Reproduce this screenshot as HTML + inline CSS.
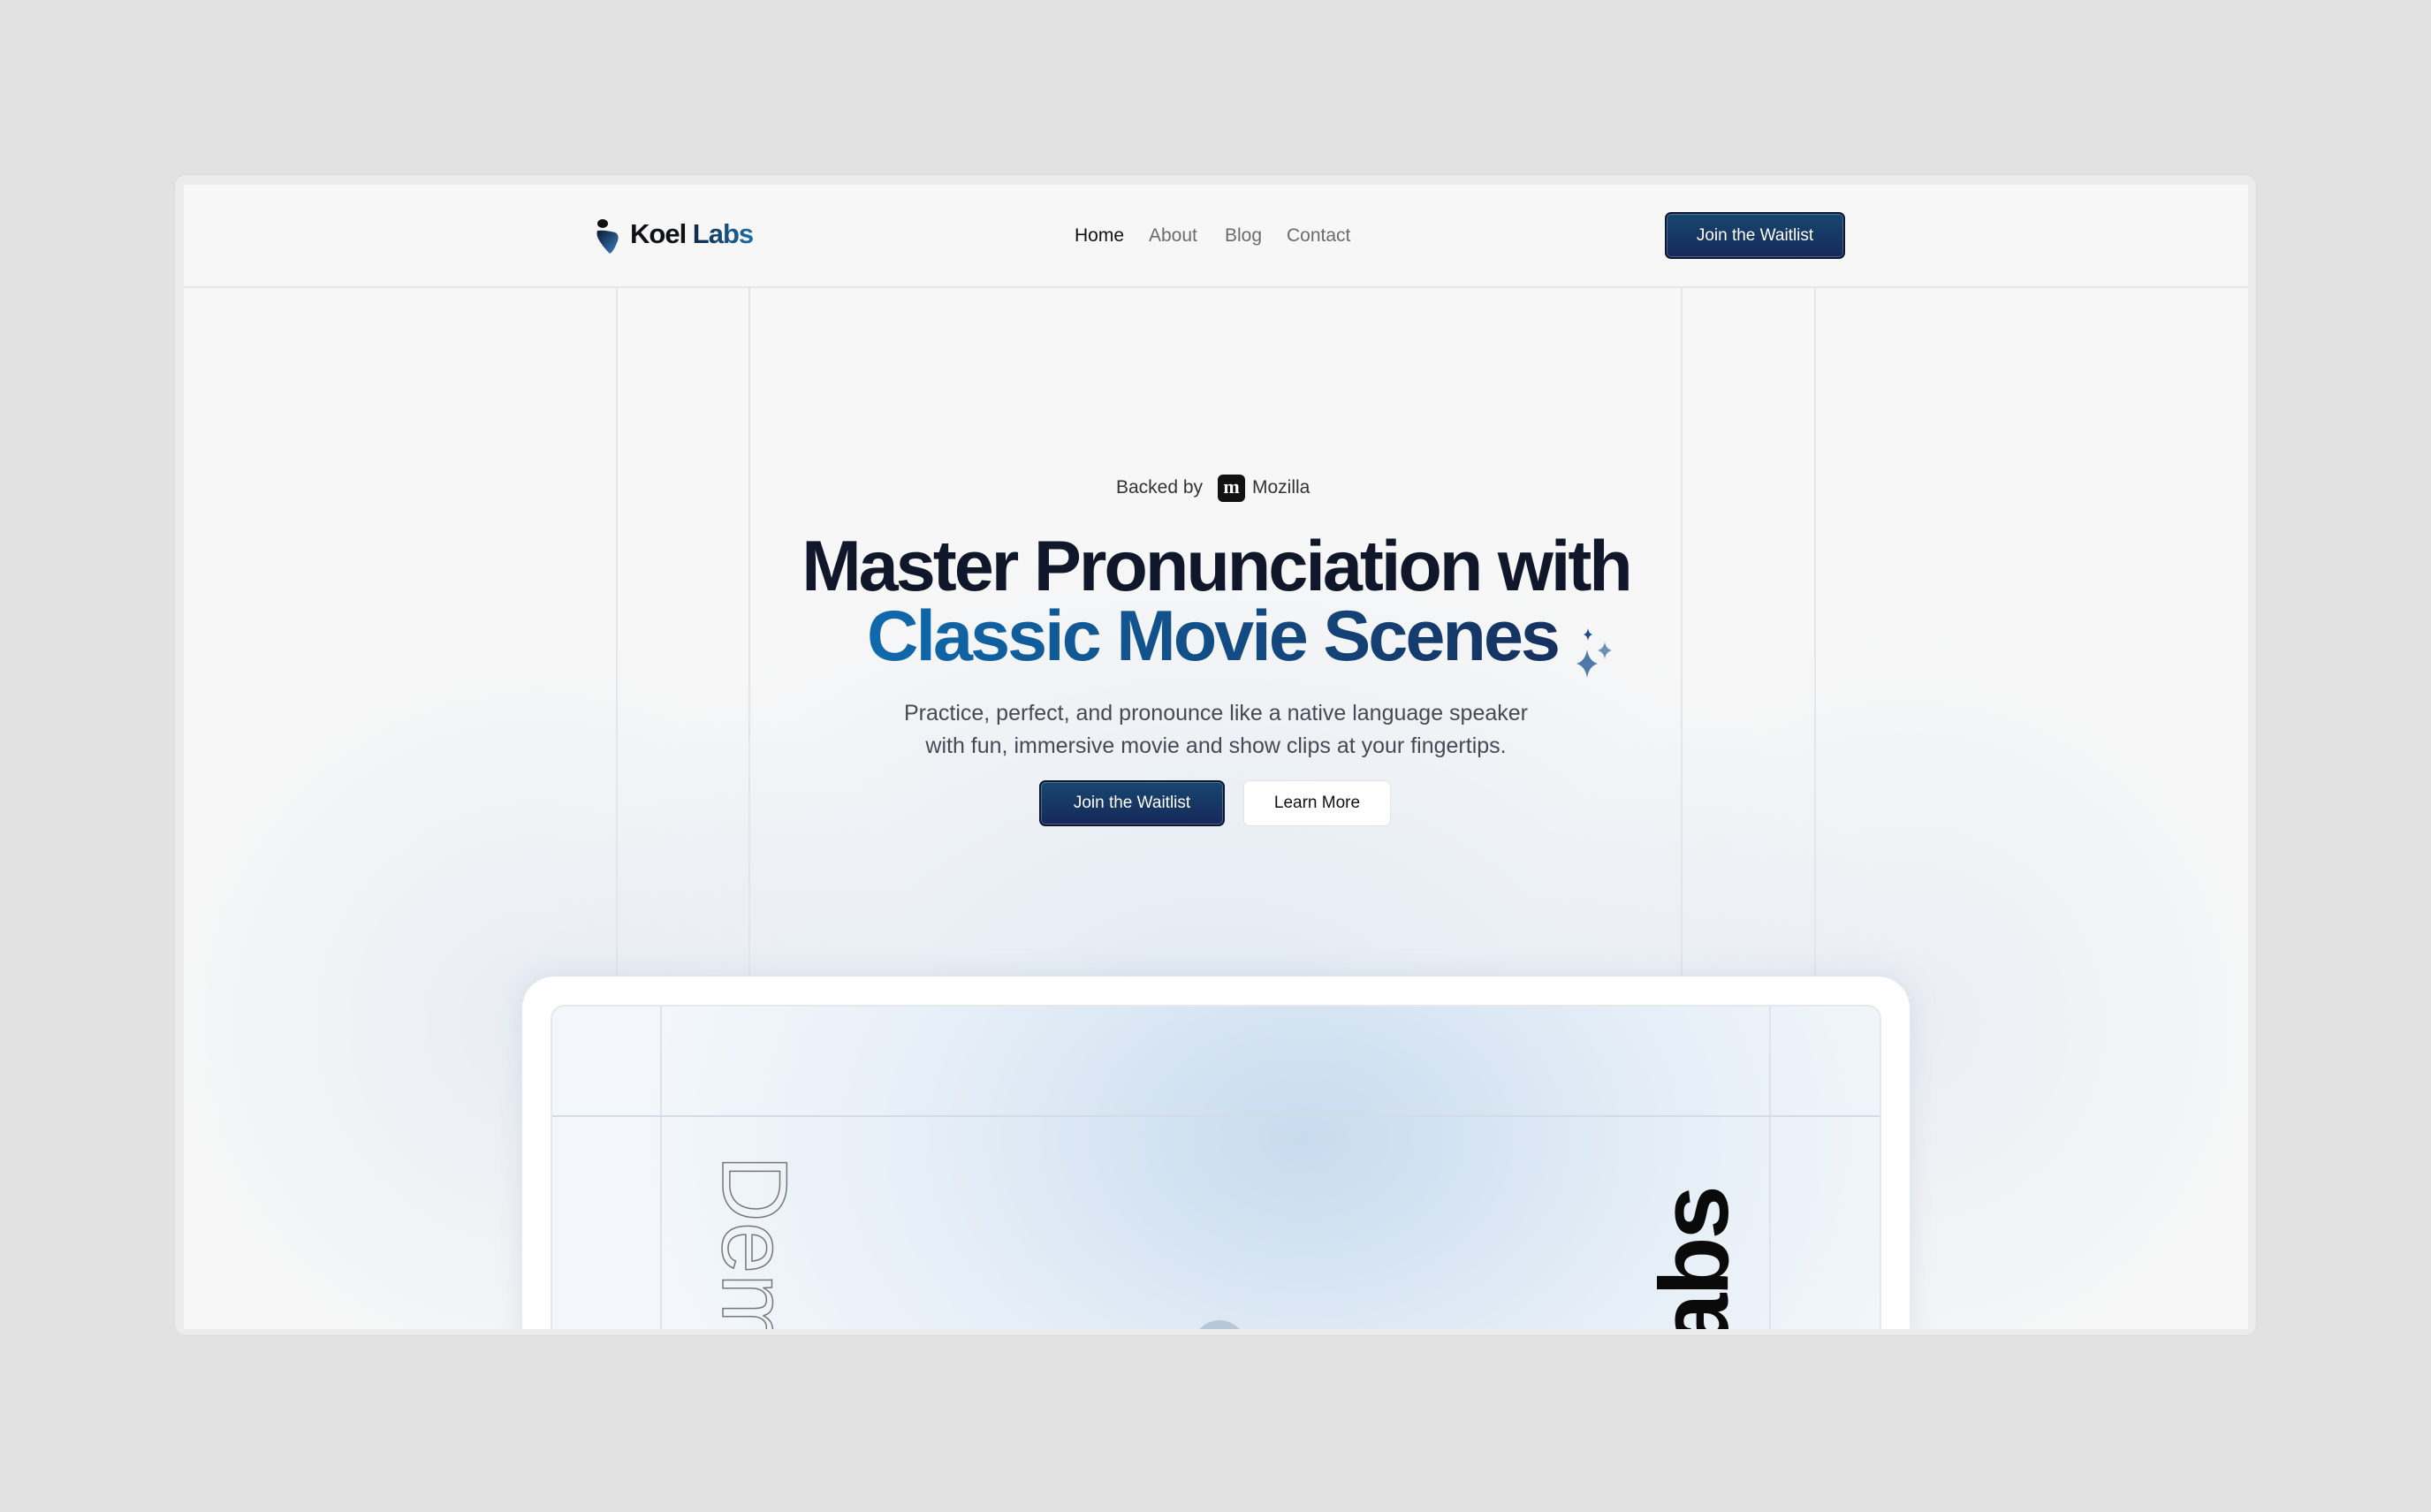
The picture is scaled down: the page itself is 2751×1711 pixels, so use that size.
<!DOCTYPE html>
<html><head><meta charset="utf-8"><style>
*{margin:0;padding:0;box-sizing:border-box}
body{width:2751px;height:1711px;background:#e2e2e2;position:relative;overflow:hidden;font-family:"Liberation Sans",sans-serif}
.frame{position:absolute;left:198px;top:198px;width:2355px;height:1313px;background:#ececec;border-radius:12px;box-shadow:0 0 2px rgba(0,0,0,.08)}
.page{position:absolute;left:10px;top:11px;width:2336px;height:1295px;background:#f7f7f7;overflow:hidden;
background-image:radial-gradient(ellipse 450px 450px at 400px 950px,rgba(215,225,240,.45),rgba(247,247,247,0)),radial-gradient(ellipse 450px 450px at 1950px 950px,rgba(215,225,240,.4),rgba(247,247,247,0)),radial-gradient(ellipse 800px 600px at 1170px 1000px,rgba(215,228,242,.75),rgba(247,247,247,0))}
.nav{position:absolute;left:0;top:0;width:100%;height:117px;border-bottom:2px solid #e6e6e6;background:#f7f7f7}
.vl{position:absolute;top:117px;height:779px;width:2px;background:#e3e5e8}
.t{position:absolute;white-space:nowrap}
.btn{position:absolute;border-radius:7px;background:linear-gradient(#17476e,#16285a);border:2px solid #0b1730;color:#fff;font-size:19px;display:flex;align-items:center;justify-content:center;box-shadow:inset 0 0 0 1px rgba(255,255,255,.25)}
.card{position:absolute;left:383px;top:896px;width:1570px;height:500px;background:#fff;border-radius:36px;box-shadow:0 0 30px rgba(150,170,200,.25)}
.inner{position:absolute;left:32px;top:32px;width:1506px;height:500px;border:2px solid #e6e8eb;border-radius:16px;overflow:hidden;
background:radial-gradient(ellipse 750px 550px at 850px 150px,#c8dbee,rgba(226,236,246,.9) 55%,#f3f7fb)}
</style></head><body>
<div class="frame"><div class="page">
 <div class="nav">
  <svg class="t" style="left:464px;top:38px" width="36" height="42" viewBox="0 0 36 42"><defs><linearGradient id="lg" x1="0" y1="0" x2="1" y2="1"><stop offset="0" stop-color="#0b1a33"/><stop offset="1" stop-color="#3b7ec0"/></linearGradient></defs><ellipse cx="10" cy="6" rx="6" ry="5" fill="#111"/><path d="M4 14 Q12 13 24 16 Q30 19 26 28 Q22 38 18 40 Q12 34 8 28 Q2 20 4 14Z" fill="url(#lg)"/></svg>
  <div class="t" style="left:505px;top:38px;font-size:31px;font-weight:bold;letter-spacing:-1px;color:#0f1115">Koel <span style="background:linear-gradient(90deg,#0f2a48,#1a6ea8);-webkit-background-clip:text;color:transparent">Labs</span></div>
  <div class="t" style="left:1008px;top:46px;font-size:21px;color:#111">Home</div>
  <div class="t" style="left:1092px;top:46px;font-size:21px;color:#6b6b6b">About</div>
  <div class="t" style="left:1178px;top:46px;font-size:21px;color:#6b6b6b">Blog</div>
  <div class="t" style="left:1248px;top:46px;font-size:21px;color:#6b6b6b">Contact</div>
  <div class="btn" style="left:1676px;top:31px;width:204px;height:53px">Join the Waitlist</div>
 </div>
 <div class="vl" style="left:489px"></div><div class="vl" style="left:639px"></div>
 <div class="vl" style="left:1694px"></div><div class="vl" style="left:1845px"></div>
 <div class="t" style="left:1055px;top:331px;font-size:21px;color:#333">Backed by</div>
 <div class="t" style="left:1170px;top:328px;width:31px;height:31px;background:#111;border-radius:6px;color:#fff;font-family:'Liberation Serif',serif;font-weight:bold;font-size:22px;text-align:center;line-height:28px">m</div>
 <div class="t" style="left:1209px;top:331px;font-size:21px;color:#333">Mozilla</div>
 <div class="t" style="left:0;width:2336px;text-align:center;top:389px;font-size:81px;font-weight:bold;letter-spacing:-3px;color:#10172a;line-height:86px">Master Pronunciation with</div>
 <div class="t" style="left:0;width:2336px;text-align:center;top:468px;font-size:81px;font-weight:bold;letter-spacing:-3px;line-height:86px"><span style="background:linear-gradient(90deg,#0f6aad,#16305e);-webkit-background-clip:text;color:transparent;padding-right:8px">Classic Movie Scenes</span></div>
 <svg class="t" style="left:1570px;top:498px" width="60" height="60" viewBox="0 0 60 60"><path d="M19 4 Q20 10 24 11 Q20 12 19 18 Q18 12 14 11 Q18 10 19 4Z" fill="#1d4f86"/><path d="M38 19 Q39 27 46 29 Q39 31 38 39 Q37 31 30 29 Q37 27 38 19Z" fill="#6b8fb8"/><path d="M18 28 Q20 41 30 44 Q20 47 18 60 Q16 47 6 44 Q16 41 18 28Z" fill="#4f79aa"/></svg>
 <div class="t" style="left:0;width:2336px;text-align:center;top:580px;font-size:25px;color:#454a55;line-height:37px">Practice, perfect, and pronounce like a native language speaker<br>with fun, immersive movie and show clips at your fingertips.</div>
 <div class="btn" style="left:968px;top:674px;width:210px;height:52px">Join the Waitlist</div>
 <div class="t" style="left:1199px;top:674px;width:167px;height:52px;background:#fff;border:1px solid #e3e3e3;border-radius:7px;font-size:19px;color:#111;display:flex;align-items:center;justify-content:center">Learn More</div>
 <div class="card"><div class="inner">
  <div style="position:absolute;left:122px;top:0;width:2px;height:500px;background:#dde3ea"></div>
  <div style="position:absolute;left:1377px;top:0;width:2px;height:500px;background:#dde3ea"></div>
  <div style="position:absolute;left:0;top:123px;width:1506px;height:2px;background:#d3dce6"></div>
  <div style="position:absolute;left:186px;top:168px;transform-origin:0 0;transform:rotate(90deg) translateY(-84px);font-size:105px;color:transparent;-webkit-text-stroke:1.5px #777;white-space:nowrap;line-height:84px">Demo</div>
  <div style="position:absolute;left:1250px;top:450px;transform-origin:0 0;transform:rotate(-90deg);font-size:110px;font-weight:bold;letter-spacing:-3px;color:#0a0a0a;white-space:nowrap;line-height:86px">Labs</div>
  <div style="position:absolute;left:725px;top:355px;width:60px;height:60px;border-radius:50%;background:#b6c7d8"></div>
 </div></div>
</div></div>
</body></html>
